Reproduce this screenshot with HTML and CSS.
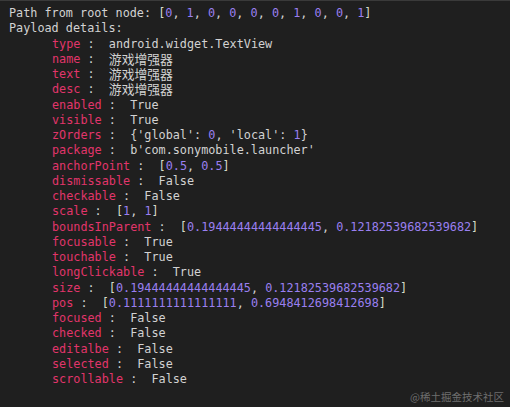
FILE: index.html
```html
<!DOCTYPE html>
<html>
<head>
<meta charset="utf-8">
<link rel="stylesheet" href="styles.css">
</head>
<body>
<div class="term">
<div class="line">Path from root node: <span class="br">[</span><span class="n">0</span>, <span class="n">1</span>, <span class="n">0</span>, <span class="n">0</span>, <span class="n">0</span>, <span class="n">0</span>, <span class="n">1</span>, <span class="n">0</span>, <span class="n">0</span>, <span class="n">1</span><span class="br">]</span></div>
<div class="line">Payload details:</div>
<div class="line kv"><span class="k">type</span> :  android.widget.TextView</div>
<div class="line kv"><span class="k">name</span> :  <span class="cjk">游戏增强器</span></div>
<div class="line kv"><span class="k">text</span> :  <span class="cjk">游戏增强器</span></div>
<div class="line kv"><span class="k">desc</span> :  <span class="cjk">游戏增强器</span></div>
<div class="line kv"><span class="k">enabled</span> :  True</div>
<div class="line kv"><span class="k">visible</span> :  True</div>
<div class="line kv"><span class="k">zOrders</span> :  {'global': <span class="n">0</span>, 'local': <span class="n">1</span>}</div>
<div class="line kv"><span class="k">package</span> :  b'com.sonymobile.launcher'</div>
<div class="line kv"><span class="k">anchorPoint</span> :  <span class="br">[</span><span class="n">0.5</span>, <span class="n">0.5</span><span class="br">]</span></div>
<div class="line kv"><span class="k">dismissable</span> :  False</div>
<div class="line kv"><span class="k">checkable</span> :  False</div>
<div class="line kv"><span class="k">scale</span> :  <span class="br">[</span><span class="n">1</span>, <span class="n">1</span><span class="br">]</span></div>
<div class="line kv"><span class="k">boundsInParent</span> :  <span class="br">[</span><span class="n">0.19444444444444445</span>, <span class="n">0.12182539682539682</span><span class="br">]</span></div>
<div class="line kv"><span class="k">focusable</span> :  True</div>
<div class="line kv"><span class="k">touchable</span> :  True</div>
<div class="line kv"><span class="k">longClickable</span> :  True</div>
<div class="line kv"><span class="k">size</span> :  <span class="br">[</span><span class="n">0.19444444444444445</span>, <span class="n">0.12182539682539682</span><span class="br">]</span></div>
<div class="line kv"><span class="k">pos</span> :  <span class="br">[</span><span class="n">0.1111111111111111</span>, <span class="n">0.6948412698412698</span><span class="br">]</span></div>
<div class="line kv"><span class="k">focused</span> :  False</div>
<div class="line kv"><span class="k">checked</span> :  False</div>
<div class="line kv"><span class="k">editalbe</span> :  False</div>
<div class="line kv"><span class="k">selected</span> :  False</div>
<div class="line kv"><span class="k">scrollable</span> :  False</div>
</div>
<div class="watermark">@稀土掘金技术社区</div>
</body>
</html>
```

FILE: styles.css
```css
html, body {
  margin: 0;
  padding: 0;
  background: #1f1f1f;
}
body {
  width: 510px;
  height: 407px;
  overflow: hidden;
  position: relative;
  border-top: 1px solid #3a3a3a;
  box-sizing: border-box;
}
.term {
  padding: 5px 0 0 9px;
  font-family: "DejaVu Sans Mono", "Noto Sans CJK SC", monospace;
  font-size: 11.8px;
  line-height: 15.25px;
  color: #d2d2d2;
}
.line {
  height: 15.25px;
  white-space: pre;
}
.kv {
  padding-left: 43px;
}
.k {
  color: #e2356b;
}
.n {
  color: #9a7ff0;
}
.br {
  color: #d6dcc8;
}
.cjk {
  font-family: "Noto Sans CJK SC", sans-serif;
  font-size: 12.8px;
  line-height: 13px;
  display: inline-block;
  vertical-align: -1px;
}
.watermark {
  position: absolute;
  right: 6px;
  bottom: 3px;
  font-family: "Noto Sans CJK SC", sans-serif;
  font-size: 10.5px;
  color: #6e6e6e;
}
```
